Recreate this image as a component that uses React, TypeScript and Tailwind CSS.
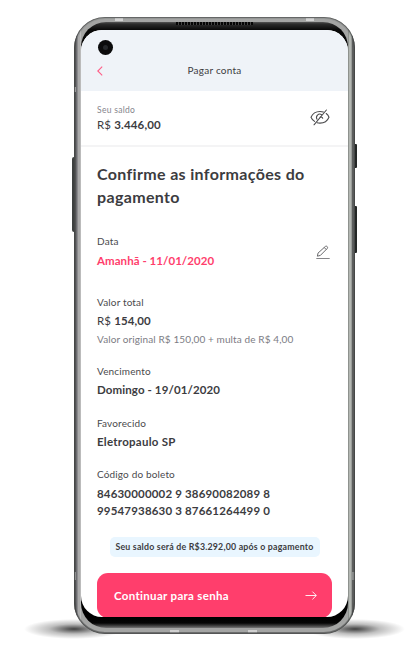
import type { ReactNode } from "react";

interface FieldProps {
  label: string;
  children: ReactNode;
}

function Field({ label, children }: FieldProps) {
  return (
    <div className="flex flex-col gap-1">
      <p className="text-[10px] leading-[14px] tracking-[0.15px] text-[#4a4a4d]">{label}</p>
      {children}
    </div>
  );
}

function BackIcon() {
  return (
    <svg className="mt-px" width="6" height="10" viewBox="0 0 6 10" fill="none" stroke="#ff5c86" strokeWidth="1.1">
      <path d="M5.2.6.8 5l4.4 4.4" />
    </svg>
  );
}

function EyeOffIcon() {
  return (
    <svg width="20" height="17" viewBox="0 0 20 17" fill="none" stroke="#4a4a4c" strokeWidth="1.05" strokeLinecap="round">
      <path d="M4.6 12.4C2.9 11.3 1.6 9.7 1 8.2 2.5 4.8 6 2.4 10 2.4c1.2 0 2.3.2 3.4.6M16.2 4.5c1.3 1 2.3 2.3 2.8 3.7-1.5 3.5-5 5.9-9 5.9-1 0-2-.1-2.9-.4" />
      <path d="M7 10.2a3.3 3.3 0 0 1 4.6-4.5M10 8.2c1.2-.5 2.5 0 2.7 1.1" />
      <path d="M16.4 1 4 15.8" />
    </svg>
  );
}

function EditIcon() {
  return (
    <svg className="mt-px" width="14" height="15" viewBox="0 0 14 15" fill="none" stroke="#59595c" strokeWidth=".9" strokeLinejoin="round">
      <path d="m1.4 11.2.6-3.1 7.3-6.6c.6-.5 1.4-.4 1.9.1.5.6.5 1.4 0 1.9l-6.8 6.9-3 .8ZM8.2 2.5l2 2" />
      <path d="M.3 13.5h13.4" stroke="#77777a" />
    </svg>
  );
}

function ArrowIcon() {
  return (
    <svg width="12" height="9" viewBox="0 0 12 9" fill="none" stroke="#fff" strokeWidth=".9">
      <path d="M.5 4.5h10.7M7.4.6l3.9 3.9-3.9 3.9" />
    </svg>
  );
}

function Screen() {
  return (
    <div className="flex h-[587px] w-[267px] flex-col overflow-hidden rounded-[21px] bg-white text-[#3c3c3f]">
      <header className="flex h-[61px] shrink-0 flex-col gap-2 bg-[#eff3f8] px-4 pt-[10px]">
        <div className="ml-px flex size-[15px] items-center justify-center rounded-full bg-[#0b0b0c]">
          <span className="size-[5px] rounded-full bg-[#26282b]" />
        </div>
        <div className="grid grid-cols-[20px_1fr_20px] items-center">
          <BackIcon />
          <h1 className="text-center text-[10px] leading-[14px] tracking-[0.25px]">Pagar conta</h1>
        </div>
      </header>

      <section className="flex h-[56px] shrink-0 items-center justify-between border-b-2 border-[#f4f4f5] pr-[18px] pl-4">
        <div className="pt-[2px]">
          <p className="text-[8.5px] leading-3 tracking-[0.3px] text-[#85858c]">Seu saldo</p>
          <p className="text-[11.5px] leading-[18px] tracking-[0.15px]">
            R$ <strong>3.446,00</strong>
          </p>
        </div>
        <div className="pb-[2px]">
          <EyeOffIcon />
        </div>
      </section>

      <main className="flex flex-col gap-4 px-4 pt-[15px]">
        <h2 className="pb-[10px] text-[16px] leading-[23px] font-bold tracking-[0.34px]">
          Confirme as informações do
          <br />
          pagamento
        </h2>

        <div className="flex items-center justify-between pr-[2px] pb-[10px]">
          <Field label="Data">
            <p className="text-[11.5px] leading-[17px] font-bold tracking-[0.05px] text-[#ff3e6c]">
              Amanhã - 11/01/2020
            </p>
          </Field>
          <EditIcon />
        </div>

        <Field label="Valor total">
          <p className="text-[11.5px] leading-4 tracking-[0.1px]">
            R$ <strong>154,00</strong>
          </p>
          <p className="-mt-[2px] text-[10px] leading-4 tracking-[0.11px] text-[#7c7c84]">
            Valor original R$ 150,00 + multa de R$ 4,00
          </p>
        </Field>

        <div className="flex flex-col gap-[17.5px] pt-px">
          <Field label="Vencimento">
            <p className="text-[11.5px] leading-4 font-bold tracking-[0.11px]">Domingo - 19/01/2020</p>
          </Field>

          <Field label="Favorecido">
            <p className="text-[11.5px] leading-4 font-bold tracking-[0.25px]">Eletropaulo SP</p>
          </Field>

          <Field label="Código do boleto">
            <p className="text-[11.5px] leading-[17px] font-bold tracking-[0.17px]">
              84630000002 9 38690082089 8
              <br />
              99547938630 3 87661264499 0
            </p>
          </Field>
        </div>

        <div className="mt-[2px] flex h-5 w-[210px] items-center justify-center self-center rounded-[5px] bg-[#e9f6ff]">
          <p className="text-[8.8px] font-bold tracking-[0.21px] whitespace-nowrap">
            Seu saldo será de R$3.292,00 após o pagamento
          </p>
        </div>

        <button className="flex h-[45px] w-full items-center justify-between rounded-[11px] bg-[#ff3e6c] pr-[15px] pl-[17px] text-white">
          <span className="text-[11.5px] font-bold tracking-[0.32px]">Continuar para senha</span>
          <ArrowIcon />
        </button>
      </main>
    </div>
  );
}

function Phone() {
  return (
    <div className="relative flex h-[617px] w-[281px] overflow-hidden rounded-[31px] bg-[#a4a5a4]">
      {/* Left rail */}
      <div className="flex w-[7px] flex-col justify-between bg-[linear-gradient(90deg,#5a5a5a_0_1px,#555_1px_2px,#6c6c70_2px_3px,#8a8a8c_3px_4px,#aaa_4px_6px,#bbb_6px)] pt-[70px] pb-[54px]">
        <span className="h-[5px] w-[2px] bg-[#aaa]" />
        <span className="h-2 w-[2px] bg-[#999]" />
      </div>

      <div className="flex w-[267px] flex-col">
        <div className="flex h-[5px] items-center justify-between px-[34px]">
          <span className="h-[3px] w-2 bg-[#d4d4d4]" />
          <span className="h-[3px] w-2 bg-[#d4d4d4]" />
        </div>
        <div className="flex h-[606px] flex-col items-center rounded-[25px] bg-[linear-gradient(180deg,#555_0,#2c2c2c_2px,#080808_8px,#000_595px,#050505_601px,#444_604px,#777_606px)]">
          <div className="flex h-2 shrink-0 flex-col">
            <span className="h-[3px] w-[77px] bg-[repeating-linear-gradient(90deg,#050505_0_2px,#444_2px_3px)]" />
          </div>
          <Screen />
        </div>
        <div className="flex h-[6px] items-center justify-center gap-[69px] pr-[3px]">
          <span className="h-[3px] w-[9px] bg-[#d0d0d0]" />
          <span className="h-[3px] w-[9px] bg-[#d0d0d0]" />
        </div>
      </div>

      {/* Right rail */}
      <div className="flex w-[7px] flex-col items-end justify-end bg-[linear-gradient(90deg,#8e928e_0_1px,#b3b7b2_1px_3px,#999c99_3px_4px,#5d5f5e_4px)] pb-[54px]">
        <span className="h-2 w-[3px] bg-[#8c8e8d]" />
      </div>

      {/* Bevel over the frame's edge */}
      <div className="pointer-events-none absolute inset-0 rounded-[31px] shadow-[inset_0_0_0_1px_rgba(70,72,71,0.6),inset_0_0_0_2px_rgba(70,72,71,0.15),inset_0_-1px_0_1px_rgba(40,40,40,0.4)]" />
    </div>
  );
}

export default function App() {
  return (
    <div className="flex h-[653px] w-[416px] bg-white pt-[17px] font-['Lato',sans-serif]">
      <div className="flex w-[74px] flex-col items-end justify-between pt-[140px]">
        <div className="h-[75px] w-[2px] rounded-l-[2px] bg-[#3d403f]" />
        {/* Ground shadow */}
        <div className="-mr-[50px] mb-[10px] h-[28px] w-[100px] bg-[radial-gradient(50px_10px_at_50%_50%,rgba(0,0,0,0.75),rgba(0,0,0,0.25)_50%,rgba(0,0,0,0)_100%)]" />
      </div>

      <Phone />

      <div className="flex w-[61px] flex-col items-start justify-between pt-[127px]">
        <div className="flex flex-col gap-[38px]">
          <div className="h-6 w-[2px] rounded-r-[1px] bg-[#242726]" />
          <div className="h-[47px] w-[2px] rounded-r-[1px] bg-[#242726]" />
        </div>
        {/* Pulled under the phone's corner */}
        <div className="mb-[10px] -ml-[50px] h-[28px] w-[100px] bg-[radial-gradient(50px_10px_at_50%_50%,rgba(0,0,0,0.75),rgba(0,0,0,0.25)_50%,rgba(0,0,0,0)_100%)]" />
      </div>
    </div>
  );
}
